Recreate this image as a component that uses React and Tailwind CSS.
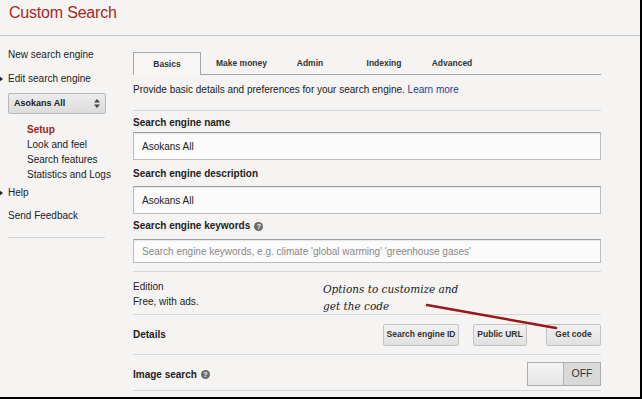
function HelpIcon() {
  return (
    <span className="ml-[4px] inline-flex h-[9px] w-[9px] items-center justify-center rounded-full bg-[#6a6a6a] text-[7px] font-bold leading-none text-white">
      ?
    </span>
  );
}

function SelectArrows() {
  return (
    <svg width="6" height="9" viewBox="0 0 6 9">
      <path d="M3 0 L6 3.5 L0 3.5 Z" fill="#444" />
      <path d="M3 9 L6 5.5 L0 5.5 Z" fill="#444" />
    </svg>
  );
}

function Sidebar() {
  return (
    <div className="w-[133px] shrink-0 pl-[8px] text-[10px] text-[#222]">
      <div className="pt-[12px] leading-[14px]">New search engine</div>
      <div className="relative mt-[10px] leading-[14px]">
        <span className="absolute left-[-9px] top-[4px] h-0 w-0 border-y-[3px] border-l-[4px] border-y-transparent border-l-[#222]" />
        Edit search engine
      </div>
      <div className="mt-[7px] flex h-[21px] w-[98px] items-center justify-between rounded-[2px] border border-[#b8b8b8] bg-gradient-to-b from-[#ececec] to-[#dcdcdc] pl-[5px] pr-[5px]">
        <span className="text-[9px] font-bold">Asokans All</span>
        <SelectArrows />
      </div>
      <div className="mt-[8px] pl-[19px] leading-[15px]">
        <div className="font-bold text-[#a4221c]">Setup</div>
        <div>Look and feel</div>
        <div>Search features</div>
        <div>Statistics and Logs</div>
      </div>
      <div className="relative mt-[4px] leading-[14px]">
        <span className="absolute left-[-9px] top-[4px] h-0 w-0 border-y-[3px] border-l-[4px] border-y-transparent border-l-[#222]" />
        Help
      </div>
      <div className="mt-[9px] leading-[14px]">Send Feedback</div>
      <div className="mt-[14px] h-px w-[97px] bg-[#d4d4d4]" />
    </div>
  );
}

function Tabs() {
  const others = [
    ["Make money", "w-[81px]"],
    ["Admin", "w-[56px]"],
    ["Indexing", "w-[92px]"],
    ["Advanced", "w-[44px]"],
  ];
  return (
    <div className="flex h-[23px] border-b border-[#a3a3a3] text-[8.5px] font-bold text-[#333]">
      <div className="mb-[-1px] flex w-[68px] items-center justify-center border border-b-0 border-[#a8a8a8] bg-[#f7f6f4]">
        Basics
      </div>
      {others.map(([t, w]) => (
        <div key={t} className={"flex items-center justify-center " + w}>
          {t}
        </div>
      ))}
    </div>
  );
}

function Field({ value, placeholder, h }) {
  return (
    <div
      className={
        "flex items-center border border-[#bdbdbd] border-t-[#9d9d9d] bg-[#fbfbfb] pl-[8px] text-[10px] shadow-[inset_0_1px_1px_rgba(0,0,0,0.08)] " +
        h
      }
    >
      {value ? (
        <span className="text-[#222]">{value}</span>
      ) : (
        <span className="text-[#8a8a8a]">{placeholder}</span>
      )}
    </div>
  );
}

function Btn({ children, w }) {
  return (
    <div
      className={
        "flex h-[22px] items-center justify-center rounded-[2px] border border-[#c2c2c2] bg-gradient-to-b from-[#f2f2f2] to-[#e0e0e0] text-[8.5px] font-bold text-[#333] " +
        w
      }
    >
      {children}
    </div>
  );
}

export default function App() {
  return (
    <div
      className="relative h-[399px] w-[642px] overflow-hidden border-b-2 border-r-2 border-black bg-[#f5f4f2] text-[#222]"
      style={{ fontFamily: '"Liberation Sans", Arial, sans-serif' }}
    >
      <div className="h-[36px] border-b border-[#c9c9c9] pl-[9px] pt-[3px] text-[16px] leading-[20px] tracking-[-0.2px] text-[#a8271f]">
        Custom Search
      </div>

      <div className="flex">
        <Sidebar />

        <div className="w-[468px] pt-[16px]">
          <Tabs />

          <div className="h-[36px] border-b border-[#d6d6d6] pt-[8px] text-[10px] leading-[14px]">
            Provide basic details and preferences for your search engine.{" "}
            <span className="text-[#1d3f94]">Learn more</span>
          </div>

          <div className="h-[21px] pt-[5px] text-[10px] font-bold leading-[14px]">
            Search engine name
          </div>
          <Field value="Asokans All" h="h-[28px]" />

          <div className="h-[26px] pt-[7px] text-[10px] font-bold leading-[14px]">
            Search engine description
          </div>
          <Field value="Asokans All" h="h-[28px]" />

          <div className="flex h-[25px] items-start pt-[5px] text-[10px] font-bold leading-[14px]">
            <span>Search engine keywords</span>
            <span className="mt-[3px] flex">
              <HelpIcon />
            </span>
          </div>
          <Field
            placeholder="Search engine keywords, e.g. climate 'global warming' 'greenhouse gases'"
            h="h-[24px]"
          />

          <div className="mt-[8px] h-[44px] border-y border-[#d6d6d6] pt-[7px] text-[10px] leading-[15px]">
            <div>Edition</div>
            <div>Free, with ads.</div>
          </div>

          <div className="flex h-[40px] items-center border-b border-[#d6d6d6]">
            <span className="text-[10px] font-bold">Details</span>
            <div className="ml-auto flex items-center">
              <Btn w="w-[76px]">Search engine ID</Btn>
              <div className="ml-[14px]">
                <Btn w="w-[54px]">Public URL</Btn>
              </div>
              <div className="ml-[19px]">
                <Btn w="w-[55px]">Get code</Btn>
              </div>
            </div>
          </div>

          <div className="flex h-[36px] items-center border-b border-[#d6d6d6] pt-[3px]">
            <span className="text-[10px] font-bold">Image search</span>
            <HelpIcon />
            <div className="ml-auto flex h-[24px] w-[74px] border border-[#acacac]">
              <div className="w-[36px] border-r border-[#b4b4b4] bg-gradient-to-b from-[#f4f4f4] to-[#e6e6e6]" />
              <div className="flex flex-1 items-center justify-center bg-[#d9d9d9] text-[10.5px] text-[#333]">
                OFF
              </div>
            </div>
          </div>
        </div>
      </div>

      <div
        className="absolute left-[323px] top-[281px] text-[10.5px] italic leading-[17px] text-[#222]"
        style={{ fontFamily: '"DejaVu Serif", serif' }}
      >
        <div>Options to customize and</div>
        <div>get the code</div>
      </div>
      <svg className="absolute left-0 top-0" width="642" height="399">
        <path d="M427 305 L556 328" stroke="#9b1717" strokeWidth="2.5" strokeLinecap="round" />
      </svg>
    </div>
  );
}
